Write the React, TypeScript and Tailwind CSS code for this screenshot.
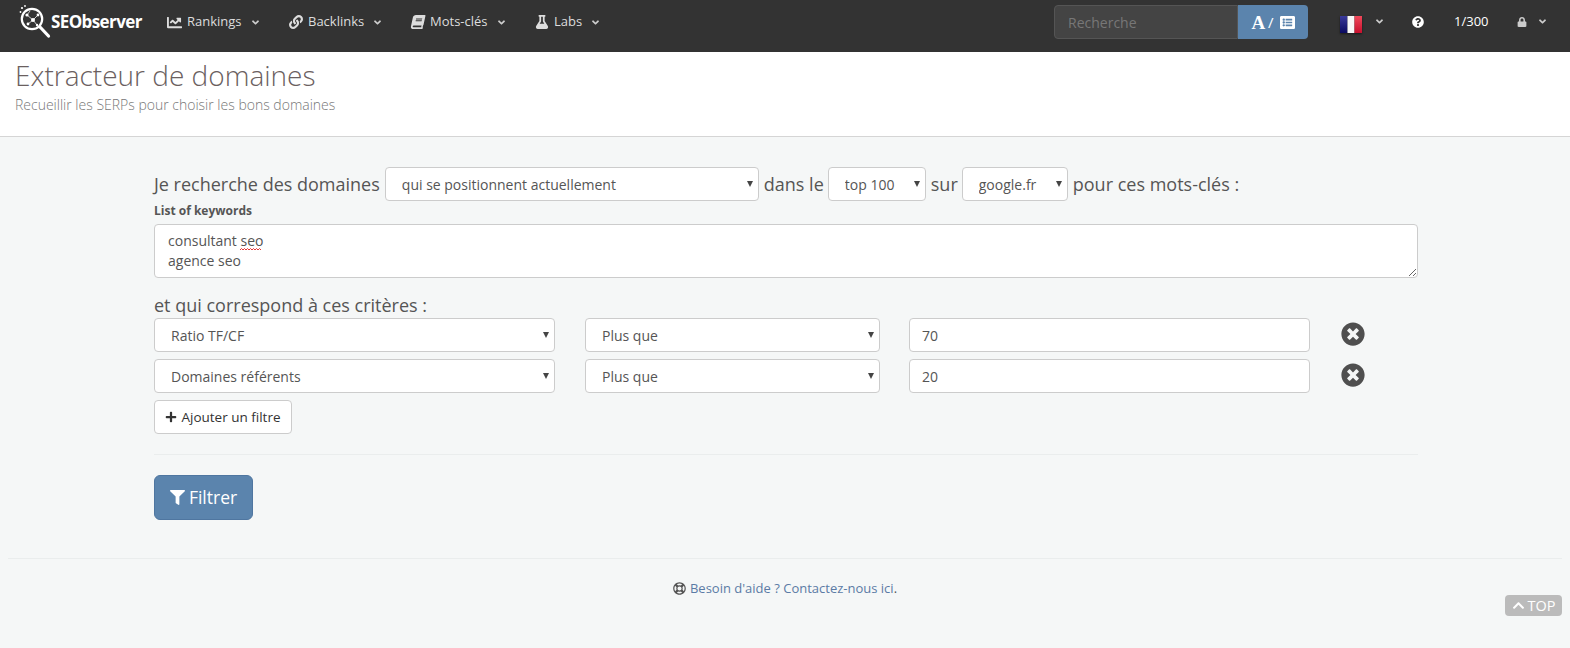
import React from 'react';
import { FaAngleDown, FaBook, FaChartLine, FaChevronUp, FaFilter, FaFlask, FaLink, FaListAlt, FaLock, FaPlus, FaQuestionCircle, FaRegLifeRing, FaTimesCircle } from 'react-icons/fa';

const Logo = () => (
  <svg width="33" height="37" viewBox="0 0 33 37" className="shrink-0">
    <circle cx="13" cy="15" r="10.2" fill="none" stroke="#fff" strokeWidth="2.2" />
    <path d="M21 23l8.5 9" stroke="#fff" strokeWidth="3.2" strokeLinecap="round" />
    <path d="M8 11l6 5 5-5M14 16l-5 4M14 16l4 5M8 11l3-4" stroke="#ddd" strokeWidth="0.9" fill="none" />
    <circle cx="8" cy="11" r="1.6" fill="#fff" />
    <circle cx="14" cy="16" r="2" fill="#fff" />
    <circle cx="19" cy="11" r="1.4" fill="#fff" />
    <circle cx="9" cy="20" r="1.4" fill="#fff" />
    <circle cx="18" cy="21" r="1.2" fill="#fff" />
    <circle cx="3" cy="4" r="1.1" fill="#fff" />
    <circle cx="1.5" cy="8" r="0.9" fill="#fff" />
    <circle cx="6" cy="2" r="0.9" fill="#fff" />
  </svg>
);

const Flag = () => (
  <svg width="22" height="17" viewBox="0 0 22 17" className="block shrink-0">
    <defs>
      <linearGradient id="blue" x1="0" x2="0" y1="0" y2="1">
        <stop offset="0" stopColor="#3a3a9a" />
        <stop offset="1" stopColor="#0a0a60" />
      </linearGradient>
      <linearGradient id="red" x1="0" x2="0" y1="0" y2="1">
        <stop offset="0" stopColor="#f0485a" />
        <stop offset="1" stopColor="#c8102e" />
      </linearGradient>
    </defs>
    <rect width="7.5" height="17" fill="url(#blue)" />
    <rect x="7.5" width="7" height="17" fill="#f8f8f8" />
    <rect x="14.5" width="7.5" height="17" fill="url(#red)" />
  </svg>
);

const NavItem = ({ icon, label, width }: { icon: React.ReactNode; label: string; width: string }) => (
  <div className={`flex items-center text-[13px] text-[#ddd] ${width}`}>
    <span className="mr-[5px] text-[#ddd]">{icon}</span>
    {label}
    <FaAngleDown className="ml-[8px] text-[11px] text-[#ccc]" />
  </div>
);

const Select = ({ value, className }: { value: string; className: string }) => (
  <div className={`relative ${className}`}>
    <select
      defaultValue={value}
      className="block h-full w-full appearance-none rounded-[4px] border border-[#ccc] bg-white pl-[16px] pr-6 text-[14px] text-[#555] outline-none"
    >
      <option>{value}</option>
    </select>
    <span className="pointer-events-none absolute right-[6px] top-[14px] h-0 w-0 border-x-[3px] border-t-[6px] border-x-transparent border-t-[#444]" />
  </div>
);

const FilterRow = ({ field, value }: { field: string; value: string }) => (
  <div className="flex h-[34px] items-center">
    <Select value={field} className="h-full w-[401px]" />
    <Select value="Plus que" className="ml-[30px] h-full w-[295px]" />
    <input
      defaultValue={value}
      className="ml-[29px] h-full w-[401px] rounded-[4px] border border-[#ccc] bg-white px-3 text-[14px] text-[#555] outline-none"
    />
    <FaTimesCircle className="ml-[31px] -mt-[3px] text-[24px] text-[#4f4f4f]" />
  </div>
);

export default function App() {
  return (
    <div className="relative h-[648px] overflow-hidden bg-[#f5f7f7] font-['Open_Sans',sans-serif]">
      <nav className="flex h-[52px] items-center bg-[#333] pb-[8px]">
        <div className="ml-[19px] flex w-[148px] items-center">
          <Logo />
          <span className="-ml-[1px] text-[17px] font-bold tracking-[-0.6px] text-white">SEObserver</span>
        </div>
        <NavItem icon={<FaChartLine className="text-[15px]" />} label="Rankings" width="w-[122px]" />
        <NavItem icon={<FaLink className="text-[14px]" />} label="Backlinks" width="w-[122px]" />
        <NavItem icon={<FaBook className="text-[14px] -skew-x-12" />} label="Mots-clés" width="w-[124px]" />
        <NavItem icon={<FaFlask className="text-[14px]" />} label="Labs" width="w-[120px]" />
        <div className="ml-[399px] flex h-[34px] w-[254px]">
          <div className="flex w-[184px] items-center rounded-l-[4px] border border-[#555] bg-[#444] pl-[13px] text-[14px] text-[#777]">
            Recherche
          </div>
          <div className="flex w-[70px] items-center justify-center rounded-r-[4px] bg-[#5b84ad] text-white">
            <span className="font-['Liberation_Serif',serif] text-[19px] leading-none font-bold">A</span>
            <span className="ml-[3px] text-[15px]">/</span>
            <FaListAlt className="ml-[6px] text-[15px]" />
          </div>
        </div>
        <div className="ml-[32px] mt-[4px] shadow-[0_1px_2px_rgba(0,0,0,0.5)]">
          <Flag />
        </div>
        <FaAngleDown className="ml-[12px] -mt-[1px] text-[11px] text-[#ccc]" />
        <FaQuestionCircle className="ml-[27px] text-[12px] text-white" />
        <span className="ml-[30px] text-[13px] text-white">1/300</span>
        <FaLock className="ml-[28px] text-[10px] text-[#ccc]" />
        <FaAngleDown className="ml-[10px] -mt-[1px] text-[11px] text-[#ccc]" />
      </nav>

      <header className="h-[85px] border-b border-[#d5d5d5] bg-white pl-[15px]">
        <h1 className="pt-[5px] text-[28px] leading-[36px] font-light text-[#6b5f5f]">Extracteur de domaines</h1>
        <p className="mt-[3px] text-[14px] leading-[18px] font-light text-[#777]">Recueillir les SERPs pour choisir les bons domaines</p>
      </header>

      <main className="ml-[154px] w-[1264px] pt-[30px]">
        <div className="flex h-[34px] items-center text-[18px] text-[#555]">
          <span>Je recherche des domaines</span>
          <Select value="qui se positionnent actuellement" className="ml-[5px] h-full w-[374px]" />
          <span className="ml-[5px]">dans le</span>
          <Select value="top 100" className="ml-[4px] h-full w-[98px]" />
          <span className="ml-[5px]">sur</span>
          <Select value="google.fr" className="ml-[4px] h-full w-[106px]" />
          <span className="ml-[5px]">pour ces mots-clés :</span>
        </div>
        <label className="mt-[1px] block text-[12px] leading-[18px] font-bold text-[#555]">List of keywords</label>
        <div className="relative mt-[4px] h-[54px]">
          <textarea
            spellCheck={false}
            defaultValue={'consultant seo\nagence seo'}
            className="block h-full w-full rounded-[4px] border border-[#ccc] bg-white px-[13px] py-[6px] text-[14px] leading-[20px] text-[#555] outline-none"
          />
          <svg width="22" height="3" viewBox="0 0 22 3" className="absolute left-[86px] top-[24px]">
            <path d="M0 2l1.5-1.5 1.5 1.5 1.5-1.5 1.5 1.5 1.5-1.5 1.5 1.5 1.5-1.5 1.5 1.5 1.5-1.5 1.5 1.5 1.5-1.5 1.5 1.5 1.5-1.5 1.5 1.5" stroke="#e02020" strokeWidth="0.9" fill="none" />
          </svg>
        </div>
        <p className="mt-[15px] text-[18px] leading-[25px] text-[#555]">et qui correspond à ces critères :</p>
        <div className="flex flex-col gap-[7px]">
          <FilterRow field="Ratio TF/CF" value="70" />
          <FilterRow field="Domaines référents" value="20" />
        </div>
        <button className="mt-[7px] flex h-[34px] w-[138px] items-center justify-center gap-[4px] rounded-[4px] border border-[#ccc] bg-white text-[13.5px] text-[#333]">
          <FaPlus className="text-[12px]" />
          Ajouter un filtre
        </button>
        <div className="mt-[20px] border-t border-[#eaeded]" />
        <button className="mt-[20px] flex h-[45px] w-[99px] items-center justify-center gap-[4px] rounded-[6px] border border-[#4f76a0] bg-[#5b84ad] text-[17.5px] text-white">
          <FaFilter className="text-[15px]" />
          Filtrer
        </button>
      </main>

      <footer className="mx-[8px] mt-[38px] border-t border-[#eaeded] pt-[20px] text-center text-[13px] leading-[18px] text-[#555]">
        <FaRegLifeRing className="mr-[4px] inline-block -mt-[2px] text-[13px]" />
        <span className="text-[#5b7ba5]">Besoin d'aide ? Contactez-nous ici</span>.
      </footer>

      <div className="absolute left-[1505px] top-[595px] flex h-[21px] w-[57px] items-center justify-center gap-[3px] rounded-[4px] bg-[#bbb] text-[14.5px] text-white">
        <FaChevronUp className="text-[13px]" />
        TOP
      </div>
    </div>
  );
}
